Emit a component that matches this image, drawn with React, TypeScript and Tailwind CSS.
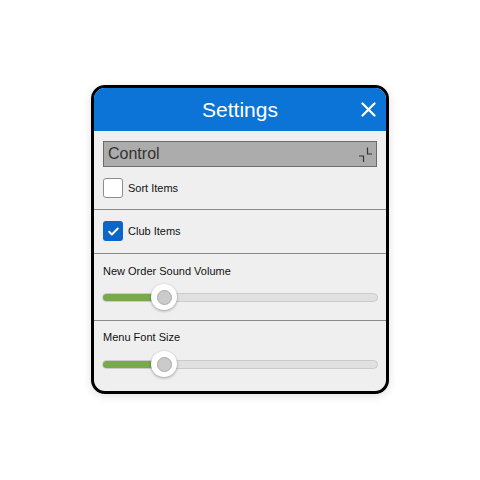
import React from "react";

function Checkbox({ checked }: { checked: boolean }) {
  if (checked) {
    return (
      <span className="w-5 h-5 rounded-[3px] bg-[#0a67c9] flex items-center justify-center flex-shrink-0">
        <svg width="13" height="13" viewBox="0 0 24 24" fill="none" stroke="white" strokeWidth="3.5" strokeLinecap="round" strokeLinejoin="round">
          <path d="M4 12.5l5 5L20 6.5" />
        </svg>
      </span>
    );
  }
  return <span className="w-5 h-5 rounded-[3px] bg-white border border-[#8c8c8c] flex-shrink-0" />;
}

function Slider({ value }: { value: number }) {
  return (
    <div className="relative h-[26px] flex items-center">
      <div className="w-full h-[9px] rounded-full bg-[#e0e0e0] border border-[#cbcbcb] overflow-hidden">
        <div className="h-full bg-[#78a94b]" style={{ width: `${value}%` }} />
      </div>
      <div
        className="absolute top-0 w-[26px] h-[26px] -ml-[13px] rounded-full bg-white shadow-[0_1px_3px_rgba(0,0,0,0.35)] flex items-center justify-center"
        style={{ left: `${value}%` }}
      >
        <span className="w-[15px] h-[15px] rounded-full bg-[#cbcbcb] border border-[#a9a9a9]" />
      </div>
    </div>
  );
}

export default function App() {
  return (
    <div className="w-[480px] h-[480px] bg-white flex justify-center pt-[85px]" style={{ fontFamily: '"Liberation Sans", Arial, sans-serif' }}>
      <div className="w-[298px] h-[309px] rounded-[14px] border-[3px] border-black bg-[#efefef] overflow-hidden shadow-[0_2px_10px_rgba(0,0,0,0.12)] flex flex-col">
        <div className="h-[43px] bg-[#0b74d6] relative flex items-center justify-center">
          <span className="text-white text-[21px]">Settings</span>
          <button className="absolute right-[10px] top-[14px] w-[15px] h-[15px]">
            <svg width="15" height="15" viewBox="0 0 15 15" fill="none" stroke="white" strokeWidth="2.2" strokeLinecap="round">
              <path d="M1.5 1.5L13.5 13.5M13.5 1.5L1.5 13.5" />
            </svg>
          </button>
        </div>

        <div className="px-[9px] pt-[10px]">
          <div className="h-[26px] bg-[#acacac] border border-[#6b6b6b] flex items-center justify-between pl-[4px] pr-[3px]">
            <span className="text-[16px] text-[#333]">Control</span>
            <svg width="15" height="17" viewBox="0 0 15 17" fill="none" stroke="#333" strokeWidth="1.2">
              <path d="M9.5 1.5V8H14M1 10H5.5V16" />
            </svg>
          </div>
          <div className="flex items-center gap-[5px] mt-[11px] h-5">
            <Checkbox checked={false} />
            <span className="text-[11px] text-[#111]">Sort Items</span>
          </div>
        </div>

        <div className="mt-[11px] border-t border-[#8a8a8a]" />
        <div className="px-[9px] pt-[11px] pb-[12px]">
          <div className="flex items-center gap-[5px] h-5">
            <Checkbox checked={true} />
            <span className="text-[11px] text-[#111]">Club Items</span>
          </div>
        </div>

        <div className="border-t border-[#8a8a8a]" />
        <div className="px-[8px] pt-[10px] pb-[10px]">
          <div className="text-[11px] text-[#111] leading-[14px] px-[1px]">New Order Sound Volume</div>
          <div className="mt-[6px]">
            <Slider value={22.5} />
          </div>
        </div>

        <div className="border-t border-[#8a8a8a]" />
        <div className="px-[8px] pt-[9px]">
          <div className="text-[11px] text-[#111] leading-[14px] px-[1px]">Menu Font Size</div>
          <div className="mt-[7px]">
            <Slider value={22.5} />
          </div>
        </div>
      </div>
    </div>
  );
}
